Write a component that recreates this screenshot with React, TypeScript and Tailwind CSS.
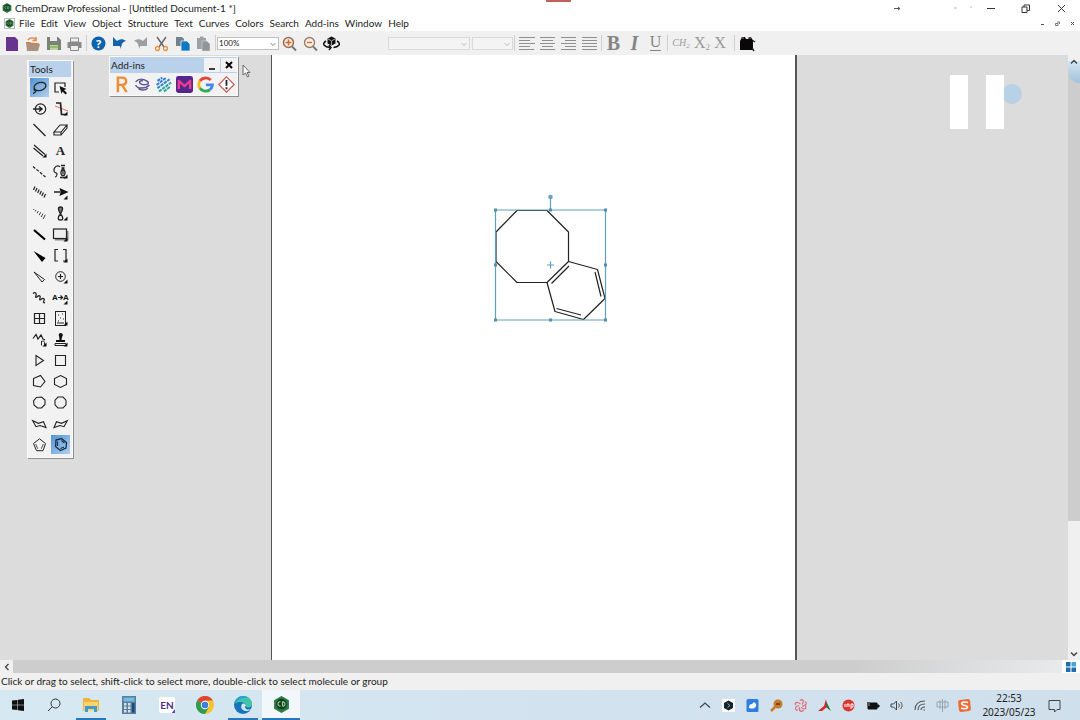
import React, { useState } from "react";

interface IconProps {
  children: React.ReactNode;
}

// Every glyph is drawn on a 21 x 21 grid
const Icon: React.FC<IconProps> = ({ children }) => (
  <svg viewBox="0 0 21 21" className="size-[21px] shrink-0" fill="none" stroke="#222" aria-hidden="true">
    {children}
  </svg>
);

const Corner = () => <path d="M17.500 13.500v4h-4z" fill="#111" stroke="none" />;

interface Tool {
  name: string;
  icon: React.ReactNode;
}

const tools: Tool[] = [
  {
    name: "Lasso",
    icon: (
      <>
        <ellipse cx="11" cy="9.500" rx="6" ry="4" transform="rotate(-15 11 9.500)" strokeWidth="1.300" />
        <path d="M5.500 11.500c-2 1.500 2.500 2.500 1 3.500s-2 .5-2 2" strokeWidth="1.200" />
      </>
    ),
  },
  {
    name: "Marquee",
    icon: (
      <>
        <path d="M9 15H5V6h10v4" strokeWidth="1.200" />
        <path d="M9.500 9l7 3-2.500 1 3 3-1.500 1.500-3-3-1 2.500z" fill="#111" stroke="none" />
      </>
    ),
  },
  {
    name: "Rotate 3D",
    icon: (
      <>
        <circle cx="11.500" cy="11" r="5.200" strokeWidth="1.200" />
        <path d="M4 11h8.500M10 8.500l3 2.500-3 2.500" strokeWidth="1.500" />
      </>
    ),
  },
  {
    name: "Structure Perspective",
    icon: (
      <>
        <path d="M5 8l13 5" stroke="#e66" />
        <path d="M6 5h4.500l1 11.500H16" strokeWidth="1.700" />
        <Corner />
      </>
    ),
  },
  { name: "Solid Bond", icon: <path d="M4.500 5l12 12" strokeWidth="1.200" /> },
  {
    name: "Eraser",
    icon: <path d="M4 13l6-7h7l-6 7zM4 13v3h7v-3M11 16l6-7V6" strokeWidth="1.100" />,
  },
  {
    name: "Multiple Bonds",
    icon: (
      <>
        <path d="M5 5l11 9.500M4.500 8l9.500 8" strokeWidth="1.200" />
        <Corner />
      </>
    ),
  },
  {
    name: "Text",
    icon: (
      <text x="10.500" y="15" textAnchor="middle" className="font-['Liberation_Serif'] text-[13px] font-bold" fill="#222" stroke="none">
        A
      </text>
    ),
  },
  { name: "Dashed Bond", icon: <path d="M4 5.500l12.500 10.500" strokeDasharray="3 1.500" strokeWidth="1.200" /> },
  {
    name: "Pen",
    icon: (
      <>
        <path d="M10 6C8 3 3.500 6 4 10c.5 3 3.500 1 3 3.500S5 16 5 16" strokeWidth="1.200" />
        <path d="M11 4.500h4M11.500 7h3" strokeWidth="1.500" />
        <path d="M13 7.500c3 3 2.500 5 1 7h-2c-1.500-2-2-4 1-7zM13 9v4" strokeWidth="1.300" />
        <path d="M10 16.500h5" strokeWidth="1.500" />
        <Corner />
      </>
    ),
  },
  {
    name: "Hashed Bond",
    icon: <path d="M6 4.500L4.500 8M8 6L6.500 9.500M10.200 7.500L8.700 11M12.300 9l-1.500 3.500M14.400 10.500L12.900 14M16.500 12L15 15.500" strokeWidth="1.200" />,
  },
  {
    name: "Arrows",
    icon: (
      <>
        <path d="M4 10h6" strokeWidth="1.500" />
        <path d="M9.500 6l9 4-9 4 1-4z" fill="#111" stroke="none" />
        <Corner />
      </>
    ),
  },
  {
    name: "Hashed Wedged Bond",
    icon: <path d="M5 6l-.5 1M7 7L6.200 8.500M9.300 8L8.200 10.300M11.600 9.300l-1.400 2.900M13.900 10.500l-1.700 3.500M16.200 11.700l-2 4.300" stroke="#444" />,
  },
  {
    name: "Orbitals",
    icon: (
      <>
        <path d="M10.500 11C8 7 7.500 4 10.500 4s2.500 3 0 7z" fill="#777" strokeWidth="1.300" />
        <path d="M10.500 11c-3 3-3 6 0 6s3-3 0-6z" strokeWidth="1.300" />
        <Corner />
      </>
    ),
  },
  { name: "Bold Bond", icon: <path d="M5 6l11 9.500" stroke="#000" strokeWidth="2.200" /> },
  {
    name: "Drawing Elements",
    icon: (
      <>
        <path d="M5 15.500h12.500V7" stroke="#888" strokeWidth="2" />
        <rect x="3.500" y="5" width="13" height="9.500" fill="#eee" strokeWidth="1.200" />
        <Corner />
      </>
    ),
  },
  { name: "Bold Wedged Bond", icon: <path d="M4.500 6l12 7-3.500 4z" fill="#000" stroke="none" /> },
  {
    name: "Brackets",
    icon: (
      <>
        <path d="M8 4.500H5V16h3M13 4.500h3V16h-3" strokeWidth="1.200" />
        <Corner />
      </>
    ),
  },
  { name: "Hollow Wedged Bond", icon: <path d="M5 6l10.500 7.500-2.500 2.500z" /> },
  {
    name: "Chemical Symbols",
    icon: (
      <>
        <circle cx="10.500" cy="10.500" r="4.800" />
        <path d="M8 10.500h5M10.500 8v5" strokeWidth="1.200" />
        <Corner />
      </>
    ),
  },
  {
    name: "Wavy Bond",
    icon: <path d="M4 6.500c2-2 4 0 3 2s0 2.500 1.500 1 3.500-.5 2.500 1.500 0 2.500 1.500 1 3.500 0 2.500 1.500-.5 2 1 2.500" strokeWidth="1.300" />,
  },
  {
    name: "Reaction Mapping",
    icon: (
      <>
        <path d="M8 10.500h4M10.500 8.500l2 2-2 2" strokeWidth="1.200" />
        <text x="2" y="13" className="font-['Liberation_Sans'] text-[8px] font-bold" fill="#111" stroke="none">
          A
        </text>
        <text x="13" y="13" className="font-['Liberation_Sans'] text-[8px] font-bold" fill="#111" stroke="none">
          A
        </text>
        <Corner />
      </>
    ),
  },
  { name: "Table", icon: <path d="M5.500 5.500h10v10h-10zM10.500 5.500v10M5.500 10.500h10" strokeWidth="1.200" /> },
  {
    name: "TLC Plate",
    icon: (
      <>
        <rect x="5.500" y="3.500" width="10" height="14" />
        <path d="M8 7h1M12 6h1M10 10h1M13 11h1M8 13h1M7 15h7" strokeWidth="1.200" />
        <Corner />
      </>
    ),
  },
  {
    name: "Acyclic Chain",
    icon: (
      <>
        <path d="M4 9.500l3-4 2 4.500 3-4 2 4 2 1" strokeWidth="1.200" />
        <path d="M12.500 16.500v-4.500M12.500 13c1-1.500 3-1 3 .5v3" />
        <Corner />
      </>
    ),
  },
  {
    name: "Templates",
    icon: (
      <>
        <path d="M9 5.500h3.500L11.500 11h3.500v2H6v-2h3.500z" fill="#111" stroke="none" />
        <circle cx="10.700" cy="6" r="2" fill="#111" stroke="none" />
        <path d="M5 14.500h11v2H5z" />
        <Corner />
      </>
    ),
  },
  { name: "Cyclopropane Ring", icon: <path d="M7 5.500l7.500 5-7.500 5z" strokeWidth="1.100" /> },
  { name: "Cyclobutane Ring", icon: <path d="M5.500 5.500h10v10h-10z" strokeWidth="1.100" /> },
  { name: "Cyclopentane Ring", icon: <path d="M4.500 7.500l7-3 4.500 6-4.500 5.500-7-1.500z" strokeWidth="1.100" /> },
  { name: "Cyclohexane Ring", icon: <path d="M10.500 4.500l6 3v6l-6 3-6-3v-6z" strokeWidth="1.100" /> },
  { name: "Cycloheptane Ring", icon: <path d="M7.500 5.500l5-.5 3.500 3v4.500l-3.500 3.500h-4L5 13l-.5-4z" strokeWidth="1.100" /> },
  { name: "Cyclooctane Ring", icon: <path d="M8 5h5l3 3.200v4.600L13 16H8l-3-3.200V8.200z" strokeWidth="1.100" /> },
  { name: "Cyclohexane Chair 1", icon: <path d="M3.700 7.700L7 13.700l4-1.200 6 2-2.500-5.800-5 1.600z" strokeWidth="1.100" /> },
  { name: "Cyclohexane Chair 2", icon: <path d="M17.300 7.700L14 13.700l-4-1.200-6 2 2.500-5.800 5 1.600z" strokeWidth="1.100" /> },
  {
    name: "Cyclopentadiene Ring",
    icon: (
      <>
        <path d="M10.500 4.800l6 4.700-2.500 7.200H7.500L4.500 9.500z" />
        <path d="M6.700 10l2 4.800M14.300 10l-2 4.800" stroke="#555" />
      </>
    ),
  },
  {
    name: "Benzene Ring",
    icon: (
      <>
        <path d="M6 6l5.500-1.500 5 4-.5 5.500-5.500 2.500-5-4z" stroke="#12314f" strokeWidth="1.300" />
        <path d="M7.500 7.500v4.500M11.500 6.500l3 2.500M14 13l-3.500 1.500" stroke="#12314f" strokeWidth="1.200" />
      </>
    ),
  },
];

const menus = ["File", "Edit", "View", "Object", "Structure", "Text", "Curves", "Colors", "Search", "Add-ins", "Window", "Help"];

const fileTools: Tool[] = [
  { name: "New", icon: <path d="M5 4h9l3 3v11H5z" fill="#68358e" stroke="none" /> },
  {
    name: "Open",
    icon: (
      <>
        <path d="M4 9h4l2 2h8l-2 7H5z" fill="#a9927f" stroke="none" />
        <path d="M6 7c2-3 6-3 8 0M14 4v3.500h-3.500" stroke="#e28b51" strokeWidth="1.600" />
        <path d="M4 10l13 1" stroke="#d97f43" strokeWidth="1.400" />
      </>
    ),
  },
  {
    name: "Save",
    icon: (
      <>
        <path d="M4 4h11l3 3v10H4z" fill="#7c8178" stroke="none" />
        <path d="M7 4h7v4H7z" fill="#eee" stroke="none" />
        <path d="M7 12h8v5H7z" fill="#b8d59c" stroke="none" />
        <path d="M5 14h12" stroke="#6fa34b" />
      </>
    ),
  },
  {
    name: "Print",
    icon: (
      <>
        <path d="M3.500 9h14v6h-14z" fill="#8a8a8a" stroke="none" />
        <path d="M6.500 5h8v4h-8zM6.500 12.500h8v5h-8z" fill="#eee" stroke="#888" />
      </>
    ),
  },
];

const editTools: Tool[] = [
  {
    name: "Help",
    icon: (
      <>
        <circle cx="10.500" cy="10.500" r="7" fill="#0d63ab" stroke="none" />
        <text x="10.500" y="14.500" textAnchor="middle" className="font-['Open_Sans'] text-[11px] font-bold" fill="#fff" stroke="none">
          ?
        </text>
      </>
    ),
  },
  {
    name: "Undo",
    icon: (
      <>
        <path d="M4 4v9h9z" fill="#1662a8" stroke="none" />
        <path d="M7 9c3-3.500 7-3.500 10-1-4 1-5 4-5 8-1-3-2-5-5-7z" fill="#1662a8" stroke="none" />
      </>
    ),
  },
  {
    name: "Redo",
    icon: (
      <>
        <path d="M17 4v9H8z" fill="#9a9fa3" stroke="none" />
        <path d="M14 9c-3-3.500-7-3.500-10-1 4 1 5 4 5 8 1-3 2-5 5-7z" fill="#9a9fa3" stroke="none" />
      </>
    ),
  },
  {
    name: "Cut",
    icon: (
      <>
        <path d="M6 4l7 10M15 4L8 14" stroke="#666" strokeWidth="1.400" />
        <circle cx="6.500" cy="15.500" r="2" stroke="#e59343" strokeWidth="1.300" />
        <circle cx="14.500" cy="15.500" r="2" stroke="#e59343" strokeWidth="1.300" />
      </>
    ),
  },
  {
    name: "Copy",
    icon: (
      <>
        <path d="M4 4h6l2 2v7H4z" fill="#71828e" stroke="none" />
        <path d="M9 8h6l3 3v7H9z" fill="#0f78c2" stroke="#eee" strokeWidth=".8" />
      </>
    ),
  },
  {
    name: "Paste",
    icon: (
      <>
        <path d="M4 5h9v11H4zM7 3.500h3.500V6H7z" fill="#9ca1a4" stroke="none" />
        <path d="M9 8h5l3 3v7H9z" fill="#8f9598" stroke="#ddd" strokeWidth=".6" />
      </>
    ),
  },
];

const viewTools: Tool[] = [
  {
    name: "Zoom In",
    icon: (
      <>
        <path d="M13 13.500l4 4" stroke="#777" strokeWidth="2" />
        <circle cx="9.500" cy="9.500" r="5" fill="#faeee4" stroke="#9a6a4d" strokeWidth="1.500" />
        <path d="M6.500 9.500h6M9.500 6.500v6" stroke="#d0692b" strokeWidth="1.500" />
      </>
    ),
  },
  {
    name: "Zoom Out",
    icon: (
      <>
        <path d="M13 13.500l4 4" stroke="#777" strokeWidth="2" />
        <circle cx="9.500" cy="9.500" r="5" fill="#faeee4" stroke="#9a7a67" strokeWidth="1.300" />
        <path d="M7 9.500h5" stroke="#d0692b" strokeWidth="1.300" />
      </>
    ),
  },
  {
    name: "3D Viewer",
    icon: (
      <>
        <path d="M10.500 3.500l4 2v5l-4 2-4-2v-5z" fill="#111" stroke="none" />
        <path d="M7 6l3.500 1.800L14 6M10.500 8v4" stroke="#ddd" strokeWidth=".7" />
        <path d="M5 8c-5 3-1 6 4 6.500M16 8c5 3 1 6-3.500 6.500M8 12l2 2.500-2 2.500" stroke="#111" strokeWidth="1.500" />
      </>
    ),
  },
];

const alignTools: Tool[] = [
  { name: "Align Left", icon: <path d="M3 4.500h16M3 7.500h11M3 10.500h16M3 13.500h11M3 16.500h15" stroke="#8f8f8f" /> },
  { name: "Align Center", icon: <path d="M3 4.500h15M5 7.500h11M3 10.500h15M5 13.500h11M3 16.500h15" stroke="#8f8f8f" /> },
  { name: "Align Right", icon: <path d="M3 4.500h15M7 7.500h11M3 10.500h15M7 13.500h11M3 16.500h15" stroke="#8f8f8f" /> },
  { name: "Justify", icon: <path d="M3 4.500h15M3 7.500h15M3 10.500h15M3 13.500h15M3 16.500h15" stroke="#8f8f8f" /> },
];

const addIns: Tool[] = [
  { name: "Reaxys", icon: <path d="M6 20V2h5c7 0 7 9 0 9H6M11 11l6 9" stroke="#f08a35" strokeWidth="3" /> },
  {
    name: "SciFinder",
    icon: (
      <>
        <path d="M2 7c4-4 10-4 15 0 3 3-4 5-8 3s-2-5 2-4" stroke="#5e5290" strokeWidth="1.800" />
        <path d="M2 11c2 5 12 5 17 0M5 15c3 3 9 3 12 0" stroke="#5e5290" strokeWidth="1.800" />
      </>
    ),
  },
  {
    name: "ChemACX",
    icon: (
      <>
        <path d="M3 6l6-4M2 11l12-9M3 15L18 4" stroke="#2d7fd3" strokeWidth="2.500" strokeDasharray="4 1" />
        <path d="M5 19L20 8M11 19l8-6" stroke="#23a89c" strokeWidth="2.500" strokeDasharray="4 1" />
      </>
    ),
  },
  {
    name: "Sigma-Aldrich",
    icon: (
      <>
        <rect width="21" height="21" rx="3" fill="#53268b" stroke="none" />
        <path d="M3.500 16V6l7 6.500 7-6.500v10" stroke="#e83c8f" strokeWidth="3" strokeLinejoin="round" />
      </>
    ),
  },
  {
    name: "Google",
    icon: (
      <>
        <path d="M17 5A9 9 0 0 0 3.500 6" stroke="#e94335" strokeWidth="3.500" />
        <path d="M3.500 6a9 9 0 0 0 0 9" stroke="#f5b916" strokeWidth="3.500" />
        <path d="M3.500 15A9 9 0 0 0 16 17" stroke="#34a853" strokeWidth="3.500" />
        <path d="M16 17c2-2 3-4 3-6h-8" stroke="#4285f4" strokeWidth="3.500" />
      </>
    ),
  },
  {
    name: "ChemSafety",
    icon: (
      <>
        <path d="M10.500 1l9.500 9.500-9.500 9.500L1 10.500z" fill="#fff" stroke="#c85a55" strokeWidth="1.500" />
        <path d="M10.500 5v7M10.500 14v2.500" stroke="#222" strokeWidth="2.200" />
      </>
    ),
  },
];

const tray: Tool[] = [
  { name: "Show hidden icons", icon: <path d="M6 12.500l5-4.500 5 4.500" stroke="#444" strokeWidth="1.200" /> },
  {
    name: "Launcher",
    icon: (
      <>
        <rect x="4" y="4" width="13" height="13" fill="#fafafa" stroke="none" />
        <path d="M10.500 5.500l4.500 2.500v5l-4.500 2.500L6 13V8z" fill="#14222c" stroke="none" />
        <path d="M9.500 8.500l2.500 2-2.500 2" stroke="#7fa9b8" />
      </>
    ),
  },
  {
    name: "Notes",
    icon: (
      <>
        <rect x="4.500" y="4" width="12" height="13" rx="1.500" fill="#2f7fe0" stroke="none" />
        <path d="M7 13c0-3 1-4 3-4l2-2 2 2c1 3-2 5-5 4.500z" fill="#fff" stroke="none" />
      </>
    ),
  },
  {
    name: "Search tool",
    icon: (
      <>
        <path d="M9 12l-4 4" stroke="#c87a26" strokeWidth="2.500" />
        <circle cx="12" cy="9" r="4.500" fill="#c87a26" stroke="none" />
        <path d="M10 9h4" stroke="#72471b" strokeWidth="2" />
      </>
    ),
  },
  {
    name: "Sync",
    icon: (
      <path
        d="M10.500 9c-4-3-6-1-5 1M12 9.500c3-4 0-6-2-4M12 11c5 0 5-4 3-4.500M11 12c3 4 6 1 4.500-1M9.500 12c-1 5 3 5 4 3M9 10.500c-5 1-4 5-1 4.500"
        stroke="#e26b70"
        strokeWidth="1.200"
      />
    ),
  },
  {
    name: "Autodesk",
    icon: (
      <>
        <path d="M4 16l6-5 2-7 1 8-5 4z" fill="#d9252b" stroke="none" />
        <path d="M12 6l5 10-5-4z" fill="#336b3c" stroke="none" />
      </>
    ),
  },
  {
    name: "Creative Cloud",
    icon: (
      <>
        <circle cx="10.500" cy="10.500" r="6" fill="#dd3532" stroke="none" />
        <path d="M7 12V9M9 12V9h2v3M13 14V9h2v3h-2" stroke="#fff" />
      </>
    ),
  },
  {
    name: "Battery",
    icon: (
      <>
        <path d="M6 8h9v6H6zM15 10h2v2h-2" fill="#111" stroke="#111" />
        <path d="M5 7h3v4H5z" fill="#555" stroke="none" />
      </>
    ),
  },
  { name: "Volume", icon: <path d="M5 9h2.500l3-3v9l-3-3H5zM12.500 8.500c1 1 1 3 0 4M14.500 7c2 2 2 5 0 7" stroke="#444" /> },
  { name: "Network", icon: <path d="M5 15C5 9 9 6 15 6M8 15c0-4 3-6 7-6M11 15c0-2 1.500-3 4-3M13.500 15h1.500" stroke="#555" strokeWidth="1.100" /> },
];

const ChemDrawLogo = () => (
  <svg viewBox="0 0 16 16" className="size-full" aria-hidden="true">
    <path d="M8 0l7 4v8l-7 4-7-4V4z" fill="#2c7a40" />
    <circle cx="8" cy="7.500" r="5" fill="#103f20" />
    <path d="M7 5.500C4 4.500 4 10 7 9.500M9 5.500v4c3 .5 3-4.500 0-4z" fill="none" stroke="#a8d8ac" />
  </svg>
);

const Separator = () => <span className="mx-px h-4 w-px shrink-0 bg-[#cfcfcf]" />;

const ToolButtons: React.FC<{ items: Tool[] }> = ({ items }) => (
  <>
    {items.map((item) => (
      <button key={item.name} type="button" title={item.name} aria-label={item.name} className="shrink-0">
        <Icon>{item.icon}</Icon>
      </button>
    ))}
  </>
);

interface DropdownProps {
  label: string;
  value: string;
  options: string[];
  disabled?: boolean;
  width: string;
  onChange?: (value: string) => void;
}

const Dropdown: React.FC<DropdownProps> = ({ label, value, options, disabled, width, onChange }) => (
  <span className={`relative flex shrink-0 ${width}`}>
    <select
      aria-label={label}
      value={value}
      disabled={disabled}
      onChange={(e) => onChange?.(e.target.value)}
      className="h-[13px] w-full appearance-none rounded-none border border-[#c0c0c0] bg-white pl-px text-[8px] leading-none outline-none disabled:border-[#d9d9d9] disabled:bg-[#f4f4f4] disabled:opacity-100"
    >
      {options.map((option) => (
        <option key={option}>{option}</option>
      ))}
    </select>
    <svg viewBox="0 0 8 8" className="pointer-events-none absolute top-1 right-0.5 size-2" fill="none" stroke={disabled ? "#bbb" : "#888"}>
      <path d="M1.500 2L4 4.500 6.500 2" />
    </svg>
  </span>
);

const TitleBar = () => (
  <header className="relative flex h-4 items-center bg-white pl-0.5">
    <span className="size-2.5">
      <ChemDrawLogo />
    </span>
    <h1 className="ml-[3px] text-[10px] leading-4">ChemDraw Professional - [Untitled Document-1 *]</h1>
    <span className="absolute top-0 left-1/2 ml-1.5 h-0.5 w-[25px] bg-[#bf6155]" />
    <svg viewBox="0 0 96 16" className="ml-auto h-4 w-24" fill="none">
      <path d="M18 8.500h6M22 7l2 1.500-2 1.500" stroke="#555" />
      <path d="M78 8h3M94 7h2" stroke="#ddd" strokeWidth="2" />
    </svg>
    <button type="button" aria-label="Minimize" className="ml-px flex w-[35px] justify-center">
      <svg viewBox="0 0 9 9" className="size-[9px]" stroke="#333">
        <path d="M1 4.500h8" />
      </svg>
    </button>
    <button type="button" aria-label="Restore" className="flex w-[35px] justify-center">
      <svg viewBox="0 0 9 9" className="size-[9px]" stroke="#333" fill="none">
        <path d="M1 3h5v5.500H1zM3 3V1h5.500v5.500H6" />
      </svg>
    </button>
    <button type="button" aria-label="Close" className="flex w-[37px] justify-center">
      <svg viewBox="0 0 9 9" className="size-[9px]" stroke="#333">
        <path d="M1 1l7 7M8 1L1 8" />
      </svg>
    </button>
  </header>
);

const MenuBar = () => (
  <nav className="flex h-[15px] items-center bg-white pl-1">
    <span className="mr-1 flex size-[11px] border border-[#bbb]">
      <ChemDrawLogo />
    </span>
    <div className="flex gap-1.5">
      {menus.map((menu) => (
        <button key={menu} type="button" className="text-[10px] leading-[15px]">
          {menu}
        </button>
      ))}
    </div>
    <div className="ml-auto flex text-[#555]">
      {["Minimize document", "Restore document", "Close document"].map((label, i) => (
        <button key={label} type="button" aria-label={label} className="flex w-[15px] justify-center">
          <svg viewBox="0 0 5 5" className="size-[5px]" stroke="currentColor" fill="none">
            {i === 0 && <path d="M1 3.500h3" />}
            {i === 1 && <path d="M.5 2.500h2.500v2H.5zM2 1h2.500v2" strokeWidth=".8" />}
            {i === 2 && <path d="M1 1l3 3M4 1L1 4" />}
          </svg>
        </button>
      ))}
    </div>
  </nav>
);

const Toolbar = () => {
  const [zoom, setZoom] = useState("100%");

  return (
    <div className="flex h-6 items-center bg-[#f0f0f0] pl-px">
      <ToolButtons items={fileTools} />
      <Separator />
      <ToolButtons items={editTools} />
      <Separator />
      <Dropdown label="Zoom" value={zoom} options={["50%", "100%", "200%"]} width="w-[62px]" onChange={setZoom} />
      <ToolButtons items={viewTools} />
      <div className="ml-[46px] flex items-center gap-0.5">
        <Dropdown label="Font" value="" options={[""]} disabled width="w-[82px]" />
        <Dropdown label="Font size" value="" options={[""]} disabled width="w-[41px]" />
      </div>
      <Separator />
      <ToolButtons items={alignTools} />
      <Separator />
      <div className="flex items-center font-['Liberation_Serif'] text-xl leading-5 text-[#858585]">
        <button type="button" aria-label="Bold" className="w-[21px] font-bold">
          B
        </button>
        <button type="button" aria-label="Italic" className="w-[21px] font-bold italic">
          I
        </button>
        <button type="button" aria-label="Underline" className="flex w-[21px] justify-center">
          <span className="h-4 border-b border-[#858585] text-base leading-[14px]">U</span>
        </button>
      </div>
      <Separator />
      <div className="flex items-center font-['Liberation_Serif'] text-base leading-5 text-[#9a9a9a]">
        <button type="button" aria-label="Formula" className="w-6 text-[10px] italic">
          CH<sub className="text-[7px]">2</sub>
        </button>
        <button type="button" aria-label="Subscript" className="w-[18px]">
          X<sub className="text-[9px]">2</sub>
        </button>
        <button type="button" aria-label="Superscript" className="w-[18px]">
          X
        </button>
      </div>
      <span className="ml-[5px] h-4 w-px bg-[#cfcfcf]" />
      <button type="button" aria-label="Search structure" className="ml-px">
        <Icon>
          <path d="M4 8l2-4h3l1 2h2l1-2h2l2 4v9H4z" fill="#080808" stroke="none" />
          <path d="M5 5h3M12 5h3" stroke="#9b7856" />
          <path d="M16 7l3 2M16 15l2 3" stroke="#222" strokeWidth="1.500" />
        </Icon>
      </button>
    </div>
  );
};

const ToolsPalette = () => {
  const [active, setActive] = useState(["Lasso", "Benzene Ring"]);

  return (
    <section
      aria-label="Tools"
      className="absolute top-[5px] left-[27px] border border-[#fafafa] bg-[#f2f2f2] px-px pb-0.5 shadow-[1px_1px_0_#8f8f8f]"
    >
      <h2 className="bg-[#b9d1ea] pl-px text-[10px] leading-4">Tools</h2>
      <div className="grid grid-cols-2">
        {tools.map((tool) => (
          <button
            key={tool.name}
            type="button"
            title={tool.name}
            aria-label={tool.name}
            aria-pressed={active.includes(tool.name)}
            onClick={() => setActive([tool.name])}
            className="p-px aria-pressed:bg-linear-to-br aria-pressed:from-[#4f8fd0] aria-pressed:to-[#b5d4ee] aria-pressed:bg-clip-content"
          >
            <span className="-m-px flex">
              <Icon>{tool.icon}</Icon>
            </span>
          </button>
        ))}
      </div>
    </section>
  );
};

const AddInsPalette = () => (
  <section
    aria-label="Add-ins"
    className="absolute top-px left-[109px] w-[129px] border border-[#fafafa] bg-[#f2f2f2] shadow-[1px_1px_0_#8f8f8f]"
  >
    <header className="flex h-4 items-center bg-[#b9d1ea] pl-px">
      <h2 className="text-[10px] leading-4">Add-ins</h2>
      <button type="button" aria-label="Minimize add-ins" className="ml-auto bg-[#f2f2f2]">
        <svg viewBox="0 0 16 14" className="h-[14px] w-4" stroke="#000">
          <path d="M5 11h6" strokeWidth="1.500" />
        </svg>
      </button>
      <button type="button" aria-label="Close add-ins" className="ml-px bg-[#f2f2f2]">
        <svg viewBox="0 0 16 14" className="h-[14px] w-4" stroke="#000">
          <path d="M5 4l6 6M11 4l-6 6" strokeWidth="2" />
        </svg>
      </button>
    </header>
    <div className="flex h-[22px] items-center pl-px">
      {addIns.map((addIn) => (
        <button key={addIn.name} type="button" title={addIn.name} aria-label={addIn.name} className="flex w-[21px] justify-center">
          <svg viewBox="0 0 21 21" className="size-[17px]" fill="none" aria-hidden="true">
            {addIn.icon}
          </svg>
        </button>
      ))}
    </div>
  </section>
);

const handles = [
  [5.5, 20],
  [60.5, 20],
  [115.5, 20],
  [5.5, 75],
  [115.5, 75],
  [5.5, 130],
  [60.5, 130],
  [115.5, 130],
];

// Benzo-fused cyclooctane with its selection frame
const Molecule = () => (
  <svg viewBox="0 0 120 135" className="absolute top-[135px] left-[218px] h-[135px] w-[120px]" fill="none" role="img" aria-label="Selected structure">
    <g stroke="#222" strokeWidth="1.200" strokeLinejoin="round">
      <path d="M27 20.500h30L78.500 42v29.500L57 92.500H27L6 71.500V42z" />
      <path d="M78.500 71.500l29 8 7.500 29-21.500 21-28.500-8-8-29" />
      <path d="M79 76L61.500 93.500M105 82l6 24.500M66.500 118.500l24.500 6.500" />
    </g>
    <g stroke="#629fbc" strokeWidth="1.200">
      <path d="M5.500 20h110v110H5.500zM60.500 20V7M57 75h7M60.500 71.500v7" />
    </g>
    <circle cx="60.500" cy="7" r="2.300" fill="#6aa3be" />
    {handles.map(([x, y]) => (
      <rect key={`${x}-${y}`} x={x - 1.5} y={y - 1.5} width="3" height="3" fill="#4f90b2" />
    ))}
  </svg>
);

const VerticalScroll = () => (
  <div className="relative flex w-3 shrink-0 flex-col bg-[#f0f0f0]">
    <span className="absolute top-1.5 right-0 h-[22px] w-3 rounded-bl-full bg-linear-to-b from-[#d3e6f5] to-[#a3c2d8]" />
    <button type="button" aria-label="Scroll up" className="relative flex h-3.5 items-center justify-center">
      <svg viewBox="0 0 8 8" className="size-2" fill="none" stroke="#444" strokeWidth="1.500">
        <path d="M1 5.500l3-3 3 3" />
      </svg>
    </button>
    <div className="flex-1">
      <div className="h-[78%] bg-[#cdcdcd]" />
    </div>
    <button type="button" aria-label="Scroll down" className="flex h-3 items-center justify-center">
      <svg viewBox="0 0 8 8" className="size-2" fill="none" stroke="#444" strokeWidth="1.500">
        <path d="M1 2.500l3 3 3-3" />
      </svg>
    </button>
  </div>
);

const Workspace = () => (
  <div className="flex min-h-0 flex-1">
    <main className="relative flex flex-1 justify-center bg-[#dcdcdc]">
      <div className="relative w-[526px] border-x border-r-2 border-[#555] bg-white">
        <Molecule />
      </div>
      <ToolsPalette />
      <AddInsPalette />
      <svg viewBox="0 0 9 14" className="absolute top-[9px] left-[242px] h-3.5 w-[9px]" fill="#fff" stroke="#666">
        <path d="M1 1v10l2.500-2 2 4 1.500-1-2-3.500h3z" />
      </svg>
      <span className="absolute top-[29px] right-[46px] size-5 rounded-full bg-[#b9d1e6]" />
      <div className="absolute top-5 right-16 flex h-[54px] gap-[18px]">
        <span className="w-[18px] bg-white" />
        <span className="w-[18px] bg-white" />
      </div>
    </main>
    <VerticalScroll />
  </div>
);

const HorizontalScroll = () => (
  <div className="flex h-[13px] bg-[#f0f0f0]">
    <button type="button" aria-label="Scroll left" className="flex w-[13px] items-center justify-center">
      <svg viewBox="0 0 8 8" className="size-2" fill="none" stroke="#444" strokeWidth="1.300">
        <path d="M5.500 1l-3 3 3 3" />
      </svg>
    </button>
    <div className="flex-1 bg-linear-to-r from-[#cdcdcd] from-80% to-[#e8eaec]" />
    <button type="button" aria-label="Panels" className="flex w-[18px] items-center justify-center bg-white">
      <svg viewBox="0 0 10 10" className="size-2.5">
        <path d="M0 0h4.500v4.500H0zM0 5.500h4.500V10H0zM5.500 5.500H10V10H5.500z" fill="#1e6fae" />
        <path d="M5.500 0H10v4.500H5.500z" fill="#4ba2dd" />
      </svg>
    </button>
  </div>
);

const Taskbar = () => (
  <footer className="flex h-[30px] bg-linear-to-r from-[#d6e8f2] to-[#cfdfec]">
    <button type="button" aria-label="Start" className="flex w-9 items-center justify-center">
      <svg viewBox="0 0 12 12" className="size-3">
        <path d="M0 1.500L5.500 1v4.700H0zM6 .8L12 0v5.700H6zM0 6.300h5.500V11L0 10.500zM6 6.300h6V12l-6-.8z" fill="#111" />
      </svg>
    </button>
    <button type="button" aria-label="Search" className="flex w-9 items-center justify-center">
      <svg viewBox="0 0 14 14" className="size-3.5" fill="none" stroke="#333">
        <circle cx="8.500" cy="5.500" r="4.500" />
        <path d="M5.500 8.500L1 13" />
      </svg>
    </button>
    <button type="button" aria-label="File Explorer" className="flex w-[38px] flex-col items-center">
      <svg viewBox="0 0 18 18" className="mt-1.5 size-[18px]">
        <path d="M1 2h6l2 2h8v11H1z" fill="#efb53c" />
        <path d="M2 6h14v9H2z" fill="#f8d46d" />
        <path d="M3 10h12v6h-3v-3H6v3H3z" fill="#3f9ad0" />
      </svg>
      <span className="mt-auto h-0.5 w-[30px] bg-[#2878c0]" />
    </button>
    <button type="button" aria-label="Calculator" className="flex w-[38px] items-center justify-center">
      <svg viewBox="0 0 14 18" className="h-[18px] w-3.5">
        <path d="M0 0h14v18H0z" fill="#5b7d98" />
        <path d="M1.500 1.500h11v4h-11z" fill="#74bce6" />
        <path d="M2 7h2.500v2.500H2zM6 7h2.500v2.500H6zM2 10.500h2.500V13H2zM6 10.500h2.500V13H6zM2 14h2.500v2.500H2zM6 14h2.500v2.500H6z" fill="#d6e3ec" />
        <path d="M10 7h2.500v9.500H10z" fill="#174b7c" />
      </svg>
    </button>
    <button type="button" className="flex w-[38px] items-center justify-center">
      <span className="relative size-4 rounded-xs bg-white text-[10px] leading-4 font-bold text-[#4b2c87]">
        EN
        <svg viewBox="0 0 6 6" className="absolute right-0 bottom-0 size-1">
          <path d="M6 0v6H1z" fill="#6b42b4" />
        </svg>
      </span>
    </button>
    <button type="button" aria-label="Chrome" className="flex w-[38px] items-center justify-center">
      <svg viewBox="0 0 18 18" className="size-[18px]">
        <circle cx="9" cy="9" r="9" fill="#f6c32b" />
        <path d="M9 9L1.200 4.500A9 9 0 0 1 16.800 4.500H9z" fill="#de4638" />
        <path d="M9 9L1.200 4.500A9 9 0 0 0 9 18l4-7z" fill="#2d9c51" />
        <circle cx="9" cy="9" r="4.200" fill="#fff" />
        <circle cx="9" cy="9" r="3.300" fill="#3b7de0" />
      </svg>
    </button>
    <button type="button" aria-label="Edge" className="flex w-[38px] flex-col items-center">
      <svg viewBox="0 0 18 18" className="mt-1.5 size-[18px]">
        <circle cx="9" cy="9" r="9" fill="#1674bd" />
        <path d="M.2 8C1 3 5 0 9 0c6 0 9 4 9 8 0 3-3 4-6 3 1-4-6-7-11.800-3z" fill="#42c4a6" />
        <path d="M.2 8C1 3 5 0 9 0c2 0 4 .5 5.500 2C9 1 4 3 .2 8z" fill="#2b9fd5" />
        <path d="M8 8c-2 3 0 7 4 7 2 0 4-.5 5-2-1 1-6 1-6-2 0-1 1-1 1-2-1-1.500-3-2-4-1z" fill="#d5e8f2" />
      </svg>
      <span className="mt-auto h-0.5 w-[30px] bg-[#2878c0]" />
    </button>
    <button type="button" aria-label="ChemDraw" className="flex w-[38px] flex-col items-center bg-[#f1f7fa]">
      <span className="mt-1.5 size-[17px]">
        <ChemDrawLogo />
      </span>
      <span className="mt-auto h-0.5 w-full bg-[#2878c0]" />
    </button>

    <div className="ml-auto flex items-center">
      {tray.map((item) => (
        <button key={item.name} type="button" title={item.name} aria-label={item.name} className="flex w-6 justify-center">
          <Icon>{item.icon}</Icon>
        </button>
      ))}
      <button type="button" aria-label="Input mode" className="flex w-5 justify-center">
        <Icon>
          <path d="M5 7h11v5H5zM10.500 4v13M8 5v9M13 5v9" stroke="#9aa5ad" />
        </Icon>
      </button>
      <button type="button" aria-label="Sogou input" className="flex w-6 justify-center">
        <Icon>
          <rect x="4.500" y="4.500" width="12" height="12" rx="2" fill="#ee6b35" stroke="none" transform="rotate(-6 10.500 10.500)" />
          <path d="M14 7.500c-7-1.500-8 2-4 2.800 6 1 4 4.500-3 3" stroke="#fff" strokeWidth="1.600" />
        </Icon>
      </button>
      <time dateTime="2023-05-23T22:53" className="w-[66px] text-center font-['Noto_Sans',sans-serif] text-[10px] leading-[14px]">
        22:53
        <br />
        2023/05/23
      </time>
      <button type="button" aria-label="Notifications" className="mr-3.5 flex w-6 justify-center">
        <Icon>
          <path d="M5 5.500h11v9h-3l-2.500 2.500v-2.500H5z" stroke="#444" />
        </Icon>
      </button>
    </div>
  </footer>
);

const App: React.FC = () => {
  return (
    <div className="flex h-screen flex-col overflow-hidden bg-[#f0f0f0] font-['Lato','Noto_Sans',sans-serif] text-[#222]">
      <TitleBar />
      <MenuBar />
      <Toolbar />
      <Workspace />
      <HorizontalScroll />
      <p className="h-[17px] pl-px text-[10px] leading-[17px]">
        Click or drag to select, shift-click to select more, double-click to select molecule or group
      </p>
      <Taskbar />
    </div>
  );
};

export default App;
